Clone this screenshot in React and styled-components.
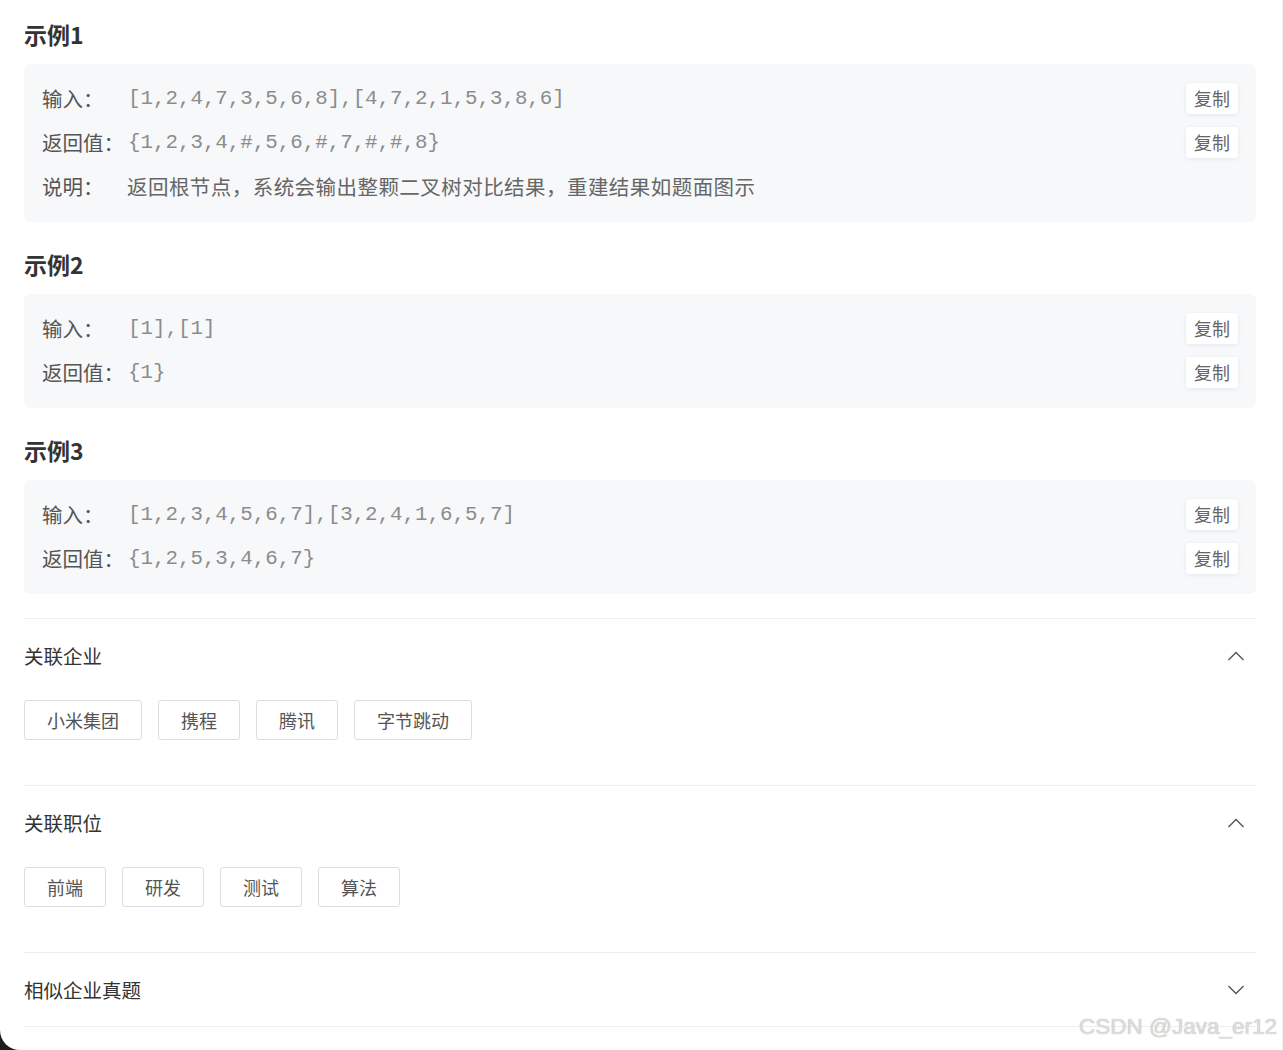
import React from "react"
import styled, { createGlobalStyle } from "styled-components"

const examples = [
  {
    title: "示例1",
    rows: [
      { label: "输入：", value: "[1,2,4,7,3,5,6,8],[4,7,2,1,5,3,8,6]", copy: true },
      { label: "返回值：", value: "{1,2,3,4,#,5,6,#,7,#,#,8}", copy: true },
      { label: "说明：", text: "返回根节点，系统会输出整颗二叉树对比结果，重建结果如题面图示" },
    ],
  },
  {
    title: "示例2",
    rows: [
      { label: "输入：", value: "[1],[1]", copy: true },
      { label: "返回值：", value: "{1}", copy: true },
    ],
  },
  {
    title: "示例3",
    rows: [
      { label: "输入：", value: "[1,2,3,4,5,6,7],[3,2,4,1,6,5,7]", copy: true },
      { label: "返回值：", value: "{1,2,5,3,4,6,7}", copy: true },
    ],
  },
]

const panels = [
  { title: "关联企业", open: true, tags: ["小米集团", "携程", "腾讯", "字节跳动"] },
  { title: "关联职位", open: true, tags: ["前端", "研发", "测试", "算法"] },
  { title: "相似企业真题", open: false, tags: [] },
]

const Chevron = ({ up }) => (
  <svg width="18" height="10" viewBox="0 0 18 10">
    <polyline
      points={up ? "1.5,9 9,1.5 16.5,9" : "1.5,1 9,8.5 16.5,1"}
      fill="none"
      stroke="#555"
      strokeWidth="1.4"
    />
  </svg>
)

const App = () => {
  return (
    <>
      <GlobalStyle />
      <Page>
        {examples.map((ex) => (
          <Example key={ex.title}>
            <ExampleTitle>{ex.title}</ExampleTitle>
            <ExampleBox>
              {ex.rows.map((row) => (
                <Row key={row.label}>
                  <Label>{row.label}</Label>
                  {row.value ? <Code>{row.value}</Code> : <Note>{row.text}</Note>}
                  {row.copy && <CopyButton>复制</CopyButton>}
                </Row>
              ))}
            </ExampleBox>
          </Example>
        ))}
        <Panels>
          {panels.map((p) => (
            <Panel key={p.title}>
              <PanelHeader>
                <span>{p.title}</span>
                <Chevron up={p.open} />
              </PanelHeader>
              {p.open && (
                <Tags>
                  {p.tags.map((t) => (
                    <Tag key={t}>{t}</Tag>
                  ))}
                </Tags>
              )}
            </Panel>
          ))}
        </Panels>
        <Watermark>CSDN @Java_er12</Watermark>
      </Page>
    </>
  )
}

// Styles
const GlobalStyle = createGlobalStyle`
  * {
    box-sizing: border-box;
  }
  body {
    margin: 0;
    background: #1e1e1e;
    font-family: "Noto Sans CJK SC", "Liberation Sans", sans-serif;
  }
`

const Page = styled.div`
  position: relative;
  height: 1050px;
  overflow: hidden;
  background: #fff;
  border-bottom-left-radius: 20px;
  border-right: 1px solid #f2f2f2;
  padding: 19px 26px 0 24px;
`

const Example = styled.section`
  & + & {
    margin-top: 27px;
  }
`

const ExampleTitle = styled.h3`
  margin: 0 0 15px;
  height: 30px;
  line-height: 30px;
  font-size: 23px;
  font-weight: 700;
  color: #333;
`

const ExampleBox = styled.div`
  background: #f7f8fa;
  border-radius: 6px;
  padding: 12px 18px 14px;
`

const Row = styled.div`
  display: flex;
  align-items: center;
  height: 44px;
`

const Label = styled.span`
  flex: 0 0 86px;
  font-size: 20.5px;
  color: #555;
  white-space: nowrap;
`

const Code = styled.span`
  flex: 1;
  font-family: "Liberation Mono", "Courier New", monospace;
  font-size: 20.8px;
  color: #8c8c8c;
  white-space: nowrap;
`

const Note = styled.span`
  flex: 1;
  margin-left: -1px;
  font-size: 20.5px;
  letter-spacing: 0.45px;
  color: #666;
  white-space: nowrap;
`

const CopyButton = styled.button`
  height: 31px;
  padding: 0 8px;
  border: none;
  border-radius: 3px;
  background: #fff;
  box-shadow: 0 1px 4px rgba(0, 0, 0, 0.08);
  font-family: "Noto Sans CJK SC", sans-serif;
  font-size: 18px;
  line-height: 31px;
  color: #666;
`

const Panels = styled.div`
  margin-top: 24px;
  border-bottom: 1px solid #eee;
`

const Panel = styled.div`
  border-top: 1px solid #eee;
`

const PanelHeader = styled.div`
  display: flex;
  align-items: center;
  justify-content: space-between;
  height: 73px;
  padding-right: 11px;
  font-size: 19.5px;
  color: #333;
`

const Tags = styled.div`
  display: flex;
  gap: 16px;
  padding: 8px 0 45px;
`

const Tag = styled.span`
  height: 40px;
  padding: 0 22px;
  border: 1px solid #ddd;
  border-radius: 3px;
  font-size: 18px;
  line-height: 38px;
  color: #555;
`

const Watermark = styled.div`
  position: absolute;
  right: 5px;
  top: 1014px;
  font-family: "Liberation Sans", Arial, sans-serif;
  font-size: 22.5px;
  color: #dedede;
  text-shadow: 0 0 1px #a8a8a8;
`

export default App
